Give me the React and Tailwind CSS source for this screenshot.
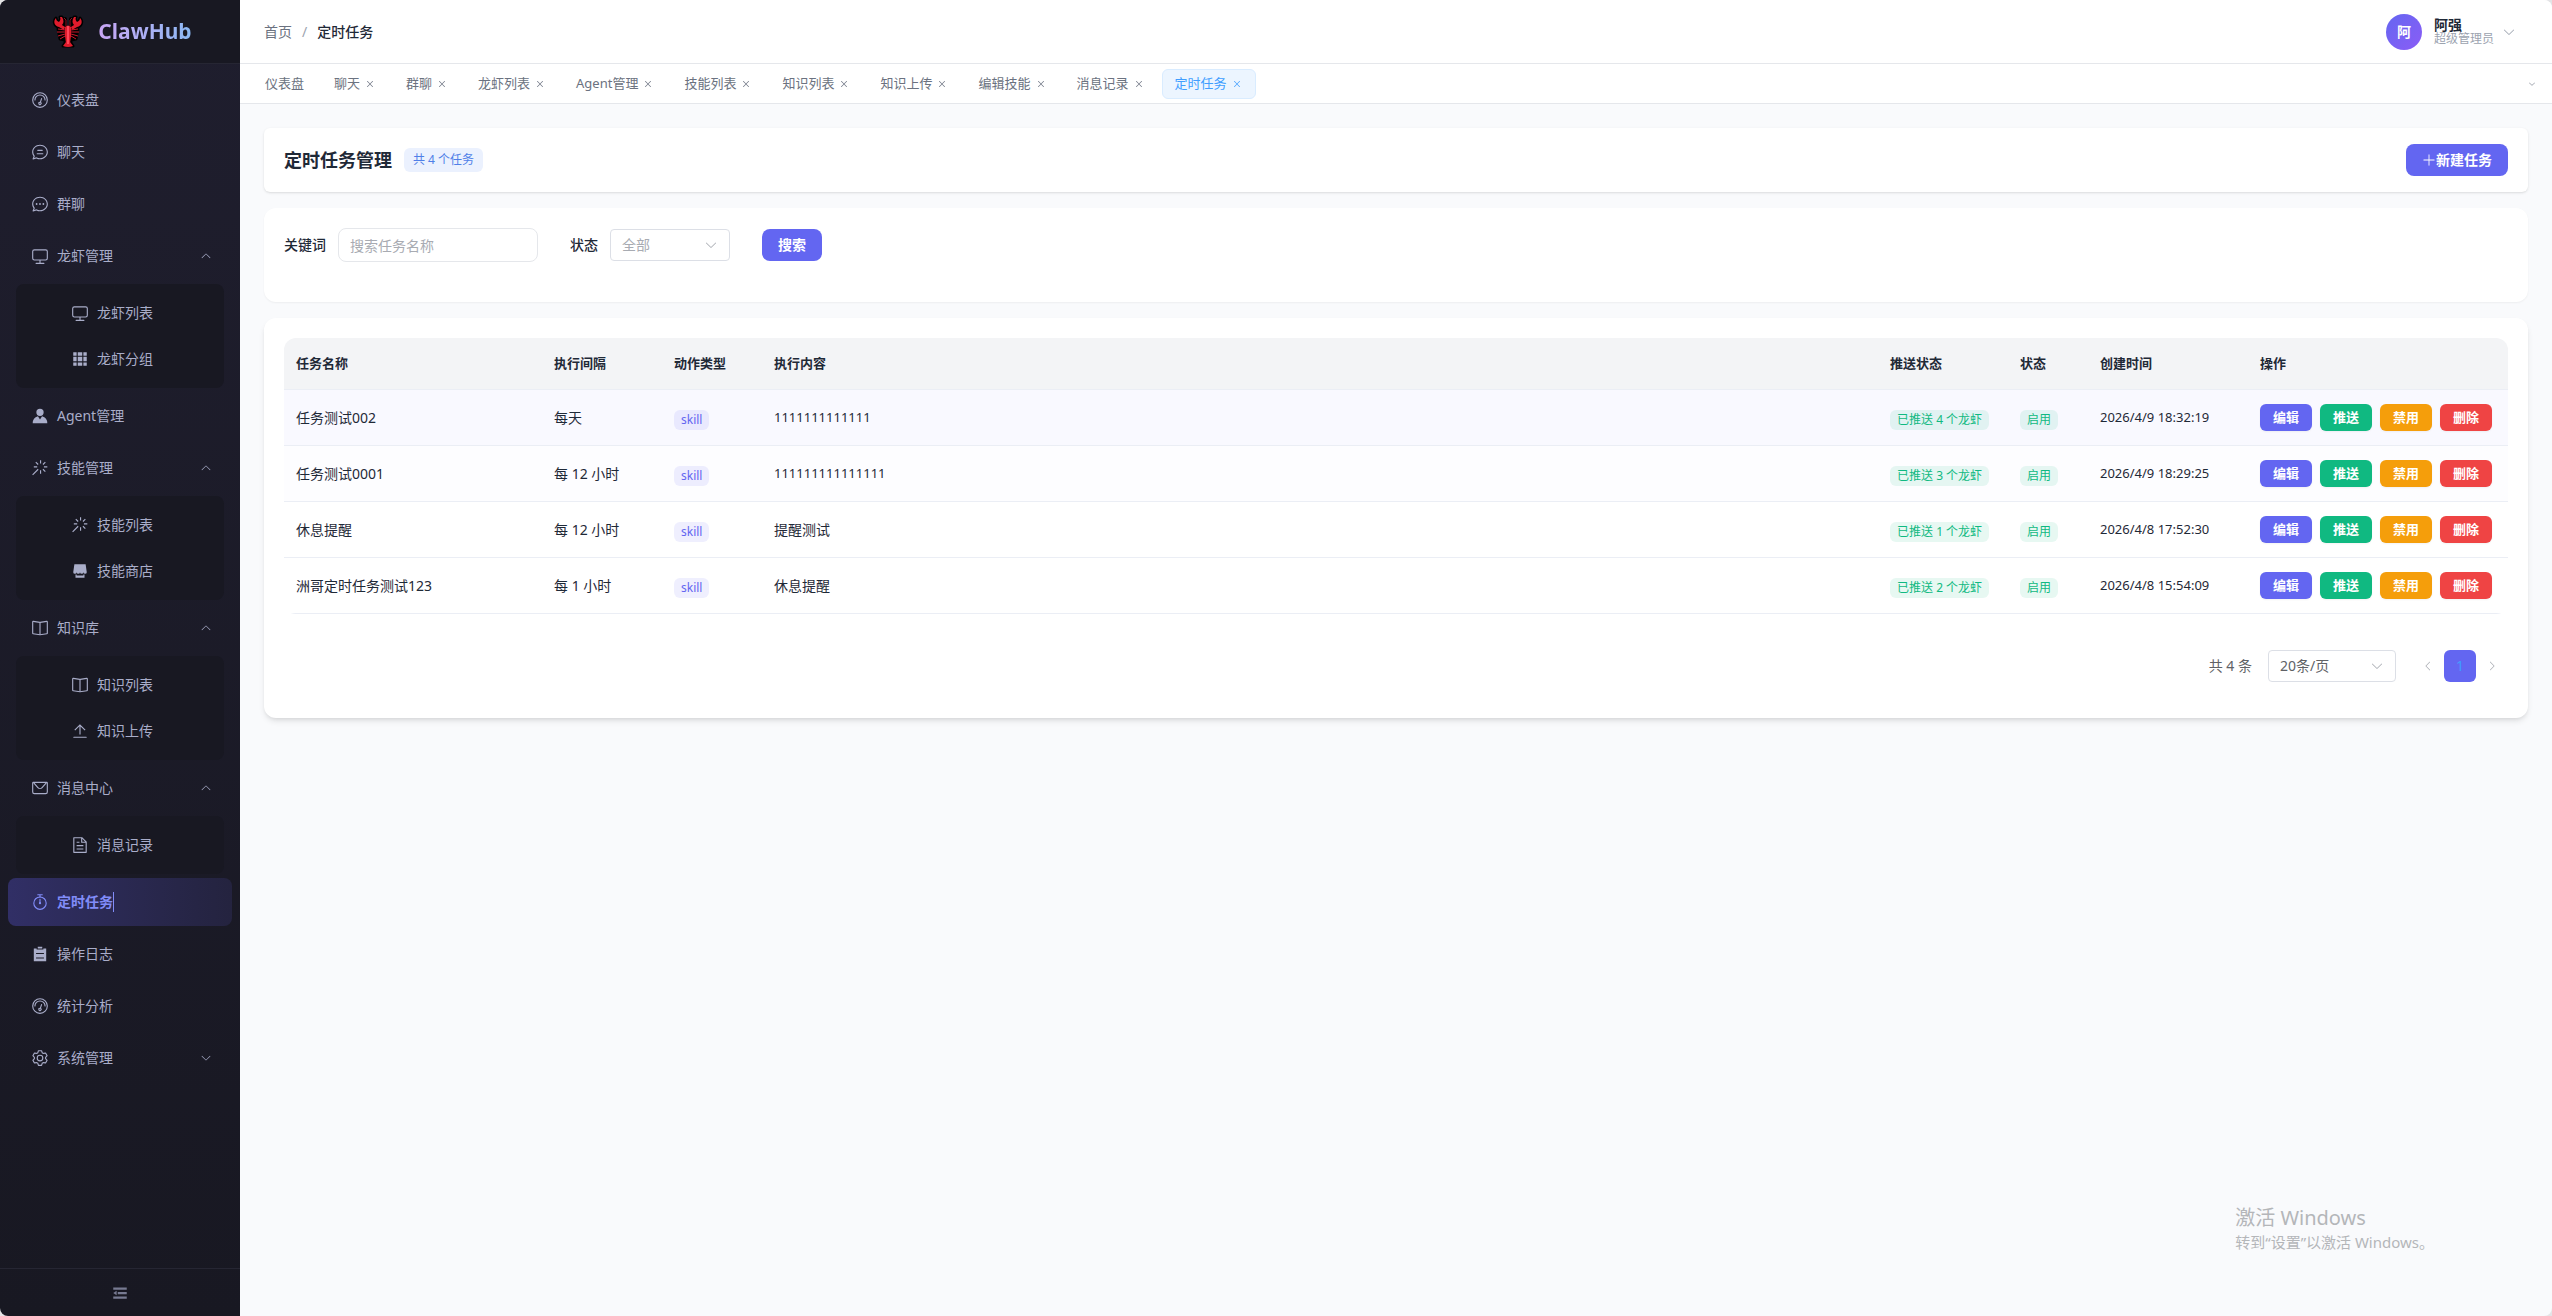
import { useState } from "react";

const PATHS = {
  odometer: [
    "M512 896a384 384 0 1 0 0-768 384 384 0 0 0 0 768m0 64a448 448 0 1 1 0-896 448 448 0 0 1 0 896",
    "M192 512a320 320 0 1 1 640 0 32 32 0 1 1-64 0 256 256 0 1 0-512 0 32 32 0 0 1-64 0",
    "M570.432 627.84A96 96 0 1 1 509.568 608l60.992-187.776A32 32 0 1 1 631.424 440l-60.992 187.776zM502.08 734.464a32 32 0 1 0 19.84-60.928 32 32 0 0 0-19.84 60.928",
  ],
  chatLine: [
    "m174.72 855.68 135.296-45.12 23.68 11.84C388.096 849.536 448.576 864 512 864c211.84 0 384-166.784 384-352S723.84 160 512 160 128 326.784 128 512c0 69.12 24.96 139.264 70.848 199.232l22.08 28.8-46.272 115.584zm-45.248 82.56A32 32 0 0 1 89.6 896l58.368-145.92C94.72 680.32 64 596.864 64 512 64 299.904 256 96 512 96s448 203.904 448 416-192 416-448 416a461.06 461.06 0 0 1-206.912-48.384l-175.616 58.56z",
    "M352 576h320q32 0 32 32t-32 32H352q-32 0-32-32t32-32m32-192h256q32 0 32 32t-32 32H384q-32 0-32-32t32-32",
  ],
  chatDot: [
    "m174.72 855.68 135.296-45.12 23.68 11.84C388.096 849.536 448.576 864 512 864c211.84 0 384-166.784 384-352S723.84 160 512 160 128 326.784 128 512c0 69.12 24.96 139.264 70.848 199.232l22.08 28.8-46.272 115.584zm-45.248 82.56A32 32 0 0 1 89.6 896l58.368-145.92C94.72 680.32 64 596.864 64 512 64 299.904 256 96 512 96s448 203.904 448 416-192 416-448 416a461.06 461.06 0 0 1-206.912-48.384l-175.616 58.56z",
    "M512 563.2a51.2 51.2 0 1 1 0-102.4 51.2 51.2 0 0 1 0 102.4m192 0a51.2 51.2 0 1 1 0-102.4 51.2 51.2 0 0 1 0 102.4m-384 0a51.2 51.2 0 1 1 0-102.4 51.2 51.2 0 0 1 0 102.4",
  ],
  monitor: [
    "M544 768v128h192a32 32 0 1 1 0 64H288a32 32 0 1 1 0-64h192V768H192A128 128 0 0 1 64 640V256a128 128 0 0 1 128-128h640a128 128 0 0 1 128 128v384a128 128 0 0 1-128 128zM192 192a64 64 0 0 0-64 64v384a64 64 0 0 0 64 64h640a64 64 0 0 0 64-64V256a64 64 0 0 0-64-64z",
  ],
  grid: [
    "M640 384v256H384V384zm64 0h192v256H704zm-64 512H384V704h256zm64 0V704h192v192zm-64-768v192H384V128zm64 0h192v192H704zM320 384v256H128V384zm0 512H128V704h192zm0-768v192H128V128z",
  ],
  avatar: [
    "M628.736 528.896A416 416 0 0 1 928 928H96a415.87 415.87 0 0 1 299.264-399.104L512 704zM720 304a208 208 0 1 1-416 0 208 208 0 0 1 416 0",
  ],
  magic: [
    "M512 64h64v192h-64zm0 576h64v192h-64zM160 480v-64h192v64zm576 0v-64h192v64zM249.856 199.04l45.248-45.184L430.848 289.6 385.6 334.848 249.856 199.104zM657.152 606.4l45.248-45.248 135.744 135.744-45.248 45.248zM114.048 923.2 68.8 877.952l316.8-316.8 45.248 45.248zM702.4 334.848 657.152 289.6l135.744-135.744 45.248 45.248z",
  ],
  shop: [
    "M704 704h64v192H256V704h64v64h384zm188.544-152.192C894.528 559.616 896 567.616 896 576a96 96 0 1 1-192 0 96 96 0 1 1-192 0 96 96 0 1 1-192 0 96 96 0 1 1-192 0c0-8.384 1.408-16.384 3.392-24.192L192 128h640z",
  ],
  reading: [
    "m512 863.36 384-54.848v-638.72L525.568 222.72a96 96 0 0 1-27.136 0L128 169.792v638.72zM137.024 106.432l370.432 52.928a32 32 0 0 0 9.088 0l370.432-52.928A64 64 0 0 1 960 169.792v638.72a64 64 0 0 1-54.976 63.36l-388.48 55.488a32 32 0 0 1-9.088 0l-388.48-55.488A64 64 0 0 1 64 808.512v-638.72a64 64 0 0 1 73.024-63.36",
    "M480 192h64v704h-64z",
  ],
  upload: [
    "M160 832h704a32 32 0 1 1 0 64H160a32 32 0 1 1 0-64m384-578.304V704h-64V247.296L237.248 490.048 192 444.8 508.8 128l316.8 316.8-45.312 45.248z",
  ],
  message: [
    "M128 224v512a64 64 0 0 0 64 64h640a64 64 0 0 0 64-64V224zm0-64h768a64 64 0 0 1 64 64v512a128 128 0 0 1-128 128H192A128 128 0 0 1 64 736V224a64 64 0 0 1 64-64",
    "M904 224 656.512 506.88a192 192 0 0 1-289.024 0L120 224zm-698.944 0 210.56 240.704a128 128 0 0 0 192.704 0L818.944 224z",
  ],
  document: [
    "M832 384H576V128H192v768h640zm-26.496-64L640 154.496V320zM160 64h480l256 256v608a32 32 0 0 1-32 32H160a32 32 0 0 1-32-32V96a32 32 0 0 1 32-32m160 448h384v64H320zm0-192h160v64H320zm0 384h384v64H320z",
  ],
  timer: [
    "M512 896a320 320 0 1 0 0-640 320 320 0 0 0 0 640m0 64a384 384 0 1 1 0-768 384 384 0 0 1 0 768",
    "M512 320a32 32 0 0 1 32 32l-.512 224a32 32 0 1 1-64 0L480 352a32 32 0 0 1 32-32",
    "M448 576a64 64 0 1 0 128 0 64 64 0 1 0-128 0m96-448v128h-64V128h-96a32 32 0 0 1 0-64h256a32 32 0 1 1 0 64z",
  ],
  list: [
    "M704 192h160v736H160V192h160v64h384zM288 512h448v-64H288zm0 256h448v-64H288zm96-576V96h256v96z",
  ],
  setting: [
    "M600.704 64a32 32 0 0 1 30.464 22.208l35.2 109.376c14.784 7.232 28.928 15.36 42.432 24.512l112.384-24.192a32 32 0 0 1 34.432 15.36L944.32 364.8a32 32 0 0 1-4.032 37.504l-77.12 85.12a357 357 0 0 1 0 49.024l77.12 85.248a32 32 0 0 1 4.032 37.504l-88.704 153.6a32 32 0 0 1-34.432 15.296L708.8 803.904c-13.44 9.088-27.648 17.28-42.368 24.512l-35.264 109.376A32 32 0 0 1 600.704 960H423.296a32 32 0 0 1-30.464-22.208L357.696 828.48a352 352 0 0 1-42.56-24.64l-112.32 24.256a32 32 0 0 1-34.432-15.36L79.68 659.2a32 32 0 0 1 4.032-37.504l77.12-85.248a357 357 0 0 1 0-48.896l-77.12-85.248A32 32 0 0 1 79.68 364.8l88.704-153.6a32 32 0 0 1 34.432-15.296l112.32 24.256c13.568-9.152 27.776-17.408 42.56-24.64l35.2-109.312A32 32 0 0 1 423.232 64H600.64zm-23.424 64H446.72l-36.352 113.088-24.512 11.968a294 294 0 0 0-34.816 20.096l-22.656 15.36-116.224-25.088-65.28 113.152 79.68 88.192-1.92 27.136a293 293 0 0 0 0 40.192l1.92 27.136-79.808 88.192 65.344 113.152 116.224-25.024 22.656 15.296a294 294 0 0 0 34.816 20.096l24.512 11.968L446.72 896h130.688l36.48-113.152 24.448-11.904a288 288 0 0 0 34.752-20.096l22.592-15.296 116.288 25.024 65.28-113.152-79.744-88.192 1.92-27.136a293 293 0 0 0 0-40.256l-1.92-27.136 79.808-88.128-65.344-113.152-116.288 24.96-22.592-15.232a288 288 0 0 0-34.752-20.096l-24.448-11.904L577.344 128zM512 320a192 192 0 1 1 0 384 192 192 0 0 1 0-384m0 64a128 128 0 1 0 0 256 128 128 0 0 0 0-256",
  ],
  fold: ["M896 192H128v128h768zm0 256H384v128h512zm0 256H128v128h768zM320 384 128 512l192 128z"],
  arrow: [
    "M831.872 340.864 512 652.672 192.128 340.864a30.59 30.59 0 0 0-42.752 0 29.12 29.12 0 0 0 0 41.6L489.664 714.24a32 32 0 0 0 44.672 0l340.288-331.712a29.12 29.12 0 0 0 0-41.728 30.59 30.59 0 0 0-42.752 0z",
  ],
  close: [
    "M764.288 214.592 512 466.88 259.712 214.592a31.936 31.936 0 0 0-45.12 45.12L466.752 512 214.528 764.224a31.936 31.936 0 1 0 45.12 45.184L512 557.184l252.288 252.288a31.936 31.936 0 0 0 45.12-45.12L557.12 512.064l252.288-252.352a31.936 31.936 0 1 0-45.12-45.184z",
  ],
  plus: [
    "M480 480V128a32 32 0 0 1 64 0v352h352a32 32 0 1 1 0 64H544v352a32 32 0 1 1-64 0V544H128a32 32 0 0 1 0-64z",
  ],
};

const MENU = [
  { icon: "odometer", label: "仪表盘" },
  { icon: "chatLine", label: "聊天" },
  { icon: "chatDot", label: "群聊" },
  {
    icon: "monitor",
    label: "龙虾管理",
    children: [
      { icon: "monitor", label: "龙虾列表" },
      { icon: "grid", label: "龙虾分组" },
    ],
  },
  { icon: "avatar", label: "Agent管理" },
  {
    icon: "magic",
    label: "技能管理",
    children: [
      { icon: "magic", label: "技能列表" },
      { icon: "shop", label: "技能商店" },
    ],
  },
  {
    icon: "reading",
    label: "知识库",
    children: [
      { icon: "reading", label: "知识列表" },
      { icon: "upload", label: "知识上传" },
    ],
  },
  {
    icon: "message",
    label: "消息中心",
    children: [{ icon: "document", label: "消息记录" }],
  },
  { icon: "timer", label: "定时任务", active: true },
  { icon: "list", label: "操作日志" },
  { icon: "odometer", label: "统计分析" },
  { icon: "setting", label: "系统管理", children: [] },
];

const TABS = [
  "仪表盘",
  "聊天",
  "群聊",
  "龙虾列表",
  "Agent管理",
  "技能列表",
  "知识列表",
  "知识上传",
  "编辑技能",
  "消息记录",
  "定时任务",
];

const TASKS = [
  { name: "任务测试002", interval: "每天", content: "1111111111111", pushed: 4, time: "2026/4/9 18:32:19", rowClass: "bg-[#f9f9ff]" },
  { name: "任务测试0001", interval: "每 12 小时", content: "111111111111111", pushed: 3, time: "2026/4/9 18:29:25", rowClass: "bg-[#fdfdff]" },
  { name: "休息提醒", interval: "每 12 小时", content: "提醒测试", pushed: 1, time: "2026/4/8 17:52:30", rowClass: "bg-white" },
  { name: "洲哥定时任务测试123", interval: "每 1 小时", content: "休息提醒", pushed: 2, time: "2026/4/8 15:54:09", rowClass: "bg-white" },
];

const COLUMNS = [
  { label: "任务名称", width: "w-[258px]" },
  { label: "执行间隔", width: "w-[120px]" },
  { label: "动作类型", width: "w-[100px]" },
  { label: "执行内容", width: "" },
  { label: "推送状态", width: "w-[130px]" },
  { label: "状态", width: "w-[80px]" },
  { label: "创建时间", width: "w-[160px]" },
  { label: "操作", width: "w-[260px]" },
];

const ACTIONS = [
  { label: "编辑", className: "bg-[#6366f1]" },
  { label: "推送", className: "bg-[#10b981]" },
  { label: "禁用", className: "bg-[#f59e0b]" },
  { label: "删除", className: "bg-[#ef4444]" },
];

function Icon({ name, className }) {
  return (
    <svg viewBox="0 0 1024 1024" fill="currentColor" aria-hidden="true" className={`shrink-0 ${className}`}>
      {PATHS[name].map((d) => (
        <path key={d} d={d} />
      ))}
    </svg>
  );
}

function Lobster() {
  const claw = "M4 3C1 6 2 11 7 12L12 15L13 12L10 10C12 8 12 5 10 2L8 2C9 4 8 6 7 7C5 6 4 5 4 3Z";
  const legs = "M13 15L6 14M13 17L5 17M13 19L6 21M13 21L8 24";
  const trunk = "M13 12Q16 9 19 12L19 21L18 28H14L13 21Z";
  const tail = "M14 27H18L21 31Q16 33 11 31Z";
  return (
    <svg viewBox="0 0 32 34" aria-hidden="true" className="h-[34px] w-8 shrink-0">
      <g fill="#000" stroke="#000" strokeWidth="3" strokeLinejoin="round">
        <path d={claw} />
        <path d={claw} transform="matrix(-1 0 0 1 32 0)" />
        <path d="M6 14H26L24 24L19 25V28L21 31H11L13 28V25L8 24Z" />
        <path d="M13 11V4M19 11V4" strokeWidth="4" strokeLinecap="round" />
      </g>
      <g fill="#e01b2c">
        <path d={claw} />
        <path d={claw} transform="matrix(-1 0 0 1 32 0)" />
        <path d={trunk} />
        <path d={tail} />
      </g>
      <g fill="none" stroke="#c8172a" strokeWidth="1">
        <path d={legs} />
        <path d={legs} transform="matrix(-1 0 0 1 32 0)" />
        <path d="M14 11V5L12 3M18 11V5L20 3" stroke="#8a1120" />
      </g>
      <path d="M15 11H17V29H15Z" fill="#ff4558" />
    </svg>
  );
}

function MenuItem({ item, open, onToggle }) {
  const tone = item.active
    ? "bg-linear-to-r from-[#312f66] to-[#24233f] font-bold text-[#818cf8]"
    : "text-[#a9adc9]";
  return (
    <li>
      <button
        type="button"
        onClick={onToggle}
        className={`flex h-12 w-full items-center rounded-lg px-5 text-left text-sm ${tone}`}
      >
        <span className="mr-[5px] flex w-6 justify-center">
          <Icon name={item.icon} className="size-[18px]" />
        </span>
        <span className={item.active ? "border-r border-[#818cf8]" : ""}>{item.label}</span>
        {item.children && (
          <Icon name="arrow" className={`ml-auto size-3 ${open ? "rotate-180" : ""}`} />
        )}
      </button>
      {open && (
        <ul className="mx-2 mt-1 rounded-lg bg-[#181822] py-1.5">
          {item.children.map((child) => (
            <li key={child.label}>
              <button
                type="button"
                className="flex h-[46px] w-full items-center pl-[52px] text-left text-sm text-[#a9adc9]"
              >
                <span className="mr-[5px] flex w-6 justify-center">
                  <Icon name={child.icon} className="size-[18px]" />
                </span>
                {child.label}
              </button>
            </li>
          ))}
        </ul>
      )}
    </li>
  );
}

function Sidebar() {
  const [closed, setClosed] = useState({ 系统管理: true });

  return (
    <aside className="flex w-60 shrink-0 flex-col bg-linear-to-b from-[#1f1e2e] to-[#181822]">
      <div className="flex h-16 items-center justify-center gap-3.5 border-b border-[#262633] bg-[#181822] pl-1">
        <Lobster />
        <span className="bg-linear-to-r from-[#c9a6f5] to-[#8ab8f3] bg-clip-text text-[21px] font-bold text-transparent">
          ClawHub
        </span>
      </div>
      <nav className="flex-1 px-2 py-3">
        <ul className="space-y-1">
          {MENU.map((item) => (
            <MenuItem
              key={item.label}
              item={item}
              open={Boolean(item.children) && !closed[item.label]}
              onToggle={() => setClosed({ ...closed, [item.label]: !closed[item.label] })}
            />
          ))}
        </ul>
      </nav>
      <button
        type="button"
        aria-label="折叠菜单"
        className="flex h-12 items-center justify-center border-t border-[#262633] text-[#777a91]"
      >
        <Icon name="fold" className="size-[18px]" />
      </button>
    </aside>
  );
}

function Header() {
  return (
    <header className="flex h-16 items-center justify-between border-b border-[#e5e7eb] bg-white pr-9 pl-6">
      <nav className="flex items-center gap-2.5 text-sm">
        <a href="#home" className="text-[#6b7280]">首页</a>
        <span className="text-[#9ca3af]">/</span>
        <span className="font-medium text-[#1f2937]">定时任务</span>
      </nav>
      <button type="button" className="flex items-center text-left">
        <span className="flex size-9 items-center justify-center rounded-full bg-linear-to-br from-[#6366f1] to-[#8b5cf6] text-sm font-bold text-white">
          阿
        </span>
        <span className="ml-3 flex flex-col">
          <span className="text-sm leading-[14px] font-bold text-[#1f2937]">阿强</span>
          <span className="text-xs leading-[14px] text-[#9ca3af]">超级管理员</span>
        </span>
        <Icon name="arrow" className="ml-2 size-3.5 text-[#9ca3af]" />
      </button>
    </header>
  );
}

function TabBar() {
  return (
    <div className="flex h-10 items-center gap-1 border-b border-[#e5e7eb] bg-white pr-4 pl-3 text-[13px]">
      {TABS.map((tab, i) => {
        const active = tab === "定时任务";
        return (
          <div
            key={tab}
            className={`flex h-[30px] items-center gap-1 rounded-md border px-3 ${
              active ? "border-[#d9ecff] bg-[#ecf5ff] text-[#409eff]" : "border-transparent text-[#6b7280]"
            }`}
          >
            <a href="#tab">{tab}</a>
            {i > 0 && (
              <button type="button" aria-label={`关闭${tab}`} className="flex size-3 items-center justify-center">
                <Icon name="close" className="size-2.5" />
              </button>
            )}
          </div>
        );
      })}
      <button type="button" aria-label="更多" className="ml-auto text-[#6b7280]">
        <Icon name="arrow" className="size-2" />
      </button>
    </div>
  );
}

function Select({ id, children, className, ...rest }) {
  return (
    <span className={`relative flex h-8 ${className}`}>
      <select
        id={id}
        className="w-full appearance-none rounded border border-[#dcdfe6] bg-white pr-8 pl-[11px] text-sm"
        {...rest}
      >
        {children}
      </select>
      <Icon
        name="arrow"
        className="pointer-events-none absolute top-[9px] right-3 size-3.5 text-[#a8abb2]"
      />
    </span>
  );
}

function Tag({ children, className }) {
  return (
    <span className={`mt-1 inline-flex h-5 items-center rounded-md px-[7px] align-middle text-xs ${className}`}>
      {children}
    </span>
  );
}

function TaskTable() {
  return (
    <div className="overflow-hidden rounded-xl">
      <table className="w-full table-fixed border-separate border-spacing-0 text-left text-sm text-[#1f2937]">
        <thead>
          <tr className="h-[52px] bg-[#f3f4f6] text-[13px]">
            {COLUMNS.map((col) => (
              <th key={col.label} className={`border-b border-[#ebeef5] px-3 font-bold ${col.width}`}>
                {col.label}
              </th>
            ))}
          </tr>
        </thead>
        <tbody className="[&_td]:border-b [&_td]:border-[#ebeef5] [&_td]:px-3">
          {TASKS.map((task) => (
            <tr key={task.name} className={`h-14 ${task.rowClass}`}>
              <td>{task.name}</td>
              <td>{task.interval}</td>
              <td>
                <Tag className="bg-[#6366f1]/10 text-[#6366f1]">skill</Tag>
              </td>
              <td className="text-[13px]">
                <span className={/^\d+$/.test(task.content) ? "" : "text-sm"}>{task.content}</span>
              </td>
              <td>
                <Tag className="bg-[#10b981]/10 text-[#10b981]">已推送 {task.pushed} 个龙虾</Tag>
              </td>
              <td>
                <Tag className="bg-[#10b981]/10 text-[#10b981]">启用</Tag>
              </td>
              <td className="text-[13px]">{task.time}</td>
              <td>
                <div className="flex gap-2">
                  {ACTIONS.map((action) => (
                    <button
                      key={action.label}
                      type="button"
                      className={`h-[27px] w-[52px] rounded-md text-[13px] font-bold text-white shadow-xs ${action.className}`}
                    >
                      {action.label}
                    </button>
                  ))}
                </div>
              </td>
            </tr>
          ))}
        </tbody>
      </table>
    </div>
  );
}

function Pagination() {
  return (
    <div className="mt-9 flex items-center justify-end text-sm text-[#606266]">
      <span>共 4 条</span>
      <Select aria-label="每页条数" className="mx-4 w-32">
        <option>20条/页</option>
      </Select>
      <button type="button" aria-label="上一页" className="flex size-8 items-center justify-center text-[#a8abb2]">
        <Icon name="arrow" className="size-3 rotate-90" />
      </button>
      <button type="button" className="size-8 rounded-md bg-[#6366f1] text-[#409eff]">
        1
      </button>
      <button type="button" aria-label="下一页" className="flex size-8 items-center justify-center text-[#a8abb2]">
        <Icon name="arrow" className="size-3 -rotate-90" />
      </button>
    </div>
  );
}

export default function App() {
  const [keyword, setKeyword] = useState("");

  return (
    <div className="bg-[#e4e4e6] font-['Noto_Sans','Noto_Sans_CJK_SC',sans-serif]">
      <div className="flex min-h-screen overflow-hidden rounded-lg bg-[#f9fafc]">
        <Sidebar />
        <div className="relative flex min-w-0 flex-1 flex-col">
          <Header />
          <TabBar />
          <main className="flex-1 space-y-4 p-6">
            <section className="flex h-16 items-center justify-between rounded-md bg-white px-5 shadow-sm">
              <div className="flex items-center gap-3">
                <h1 className="text-lg font-bold text-[#1f2937]">定时任务管理</h1>
                <span className="flex h-6 items-center rounded-md bg-[#ebf1fe] px-[9px] text-xs text-[#4f7fe8]">
                  共 4 个任务
                </span>
              </div>
              <button
                type="button"
                className="flex h-8 items-center rounded-lg bg-[#6366f1] px-4 text-sm font-bold text-white"
              >
                <Icon name="plus" className="size-3.5" />
                新建任务
              </button>
            </section>

            <form
              onSubmit={(e) => e.preventDefault()}
              className="flex items-center rounded-xl bg-white px-5 pt-5 pb-10 text-sm shadow-xs"
            >
              <label htmlFor="keyword" className="font-medium text-[#1f2937]">
                关键词
              </label>
              <input
                id="keyword"
                value={keyword}
                onChange={(e) => setKeyword(e.target.value)}
                placeholder="搜索任务名称"
                className="ml-3 h-[34px] w-[200px] rounded-lg border border-[#e5e7eb] px-[11px] placeholder:text-[#a8abb2]"
              />
              <label htmlFor="status" className="ml-8 font-medium text-[#1f2937]">
                状态
              </label>
              <Select id="status" className="ml-3 w-[120px] text-[#a8abb2]">
                <option>全部</option>
              </Select>
              <button type="submit" className="ml-8 h-8 w-[60px] rounded-lg bg-[#6366f1] font-bold text-white">
                搜索
              </button>
            </form>

            <section className="rounded-xl bg-white px-5 pt-5 pb-9 shadow-md">
              <TaskTable />
              <Pagination />
            </section>
          </main>

          <div className="pointer-events-none absolute right-[118px] bottom-16 text-[#b4b6b9]">
            <p className="text-xl leading-7">激活 Windows</p>
            <p className="text-[15px] leading-5">转到“设置”以激活 Windows。</p>
          </div>
        </div>
      </div>
    </div>
  );
}
